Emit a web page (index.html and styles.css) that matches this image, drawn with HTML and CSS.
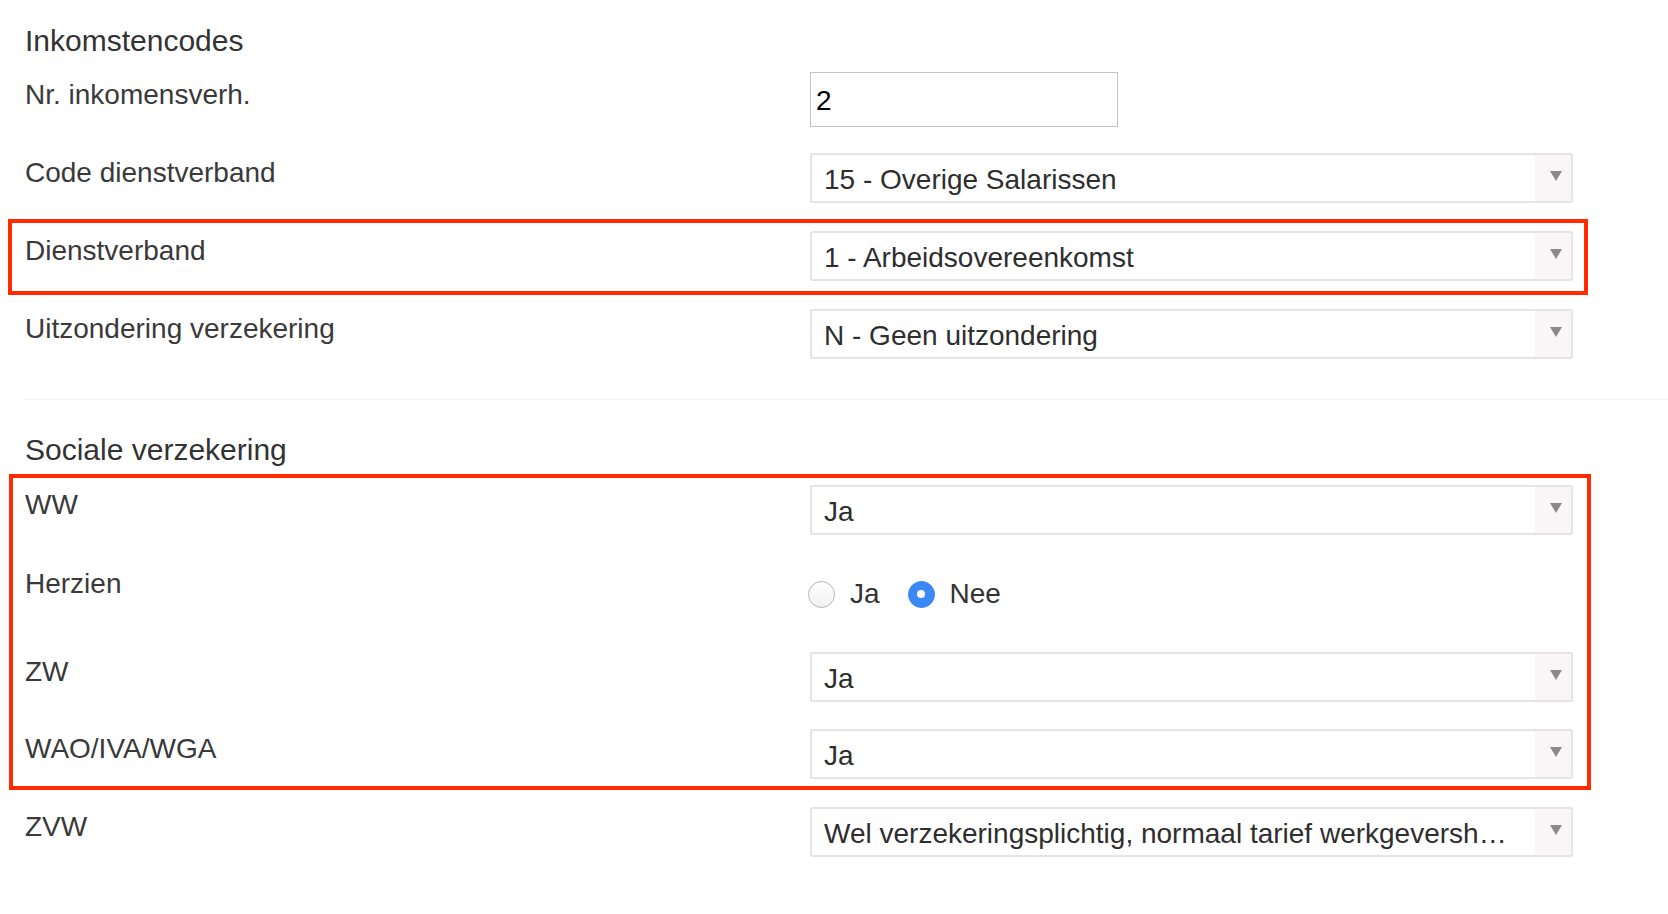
FILE: index.html
```html
<!DOCTYPE html>
<html lang="nl">
<head>
<meta charset="utf-8">
<title>Inkomstencodes</title>
<link rel="stylesheet" href="styles.css">
</head>
<body>
<div class="page">
  <h2 class="section-title">Inkomstencodes</h2>

  <div class="row row-input">
    <div class="label">Nr. inkomensverh.</div>
    <div class="control"><input class="text-input" type="text" value="2"></div>
  </div>

  <div class="row">
    <div class="label">Code dienstverband</div>
    <div class="control">
      <div class="select"><span class="select-text">15 - Overige Salarissen</span><span class="select-arrow"><i class="tri"></i></span></div>
    </div>
  </div>

  <div class="hl hl-one">
    <div class="row">
      <div class="label">Dienstverband</div>
      <div class="control">
        <div class="select"><span class="select-text">1 - Arbeidsovereenkomst</span><span class="select-arrow"><i class="tri"></i></span></div>
      </div>
    </div>
  </div>

  <div class="row row-last">
    <div class="label">Uitzondering verzekering</div>
    <div class="control">
      <div class="select"><span class="select-text">N - Geen uitzondering</span><span class="select-arrow"><i class="tri"></i></span></div>
    </div>
  </div>

  <div class="separator"></div>

  <h2 class="section-title title-two">Sociale verzekering</h2>

  <div class="hl hl-two">
    <div class="row">
      <div class="label">WW</div>
      <div class="control">
        <div class="select"><span class="select-text">Ja</span><span class="select-arrow"><i class="tri"></i></span></div>
      </div>
    </div>

    <div class="row row-radio">
      <div class="label">Herzien</div>
      <div class="control">
        <div class="radios">
          <span class="radio"></span><span class="radio-text">Ja</span>
          <span class="radio radio-checked"></span><span class="radio-text">Nee</span>
        </div>
      </div>
    </div>

    <div class="row">
      <div class="label">ZW</div>
      <div class="control">
        <div class="select"><span class="select-text">Ja</span><span class="select-arrow"><i class="tri"></i></span></div>
      </div>
    </div>

    <div class="row">
      <div class="label">WAO/IVA/WGA</div>
      <div class="control">
        <div class="select"><span class="select-text">Ja</span><span class="select-arrow"><i class="tri"></i></span></div>
      </div>
    </div>
  </div>

  <div class="row">
    <div class="label">ZVW</div>
    <div class="control">
      <div class="select"><span class="select-text">Wel verzekeringsplichtig, normaal tarief werkgeversheffing Zvw</span><span class="select-arrow"><i class="tri"></i></span></div>
    </div>
  </div>
</div>
</body>
</html>
```

FILE: styles.css
```css
html, body {
  margin: 0;
  padding: 0;
  background: #ffffff;
}

body {
  font-family: "Liberation Sans", Arial, sans-serif;
  color: #333333;
}

.page {
  padding: 23px 0 0 25px;
}

.section-title {
  margin: 0 0 13px 0;
  font-size: 30px;
  line-height: 36px;
  font-weight: normal;
  color: #333333;
}

.title-two {
  margin-bottom: 17.5px;
}

.row {
  display: flex;
  align-items: flex-start;
  width: 1548px;
  margin-bottom: 27.75px;
}

.row-input {
  margin-bottom: 26px;
}

.row-last {
  margin-bottom: 40px;
}

.label {
  width: 785px;
  flex: none;
  padding-top: 4px;
  font-size: 28px;
  line-height: 32px;
  color: #3a3a3a;
}

.row-input .label {
  padding-top: 7px;
}

.control {
  width: 763px;
  flex: none;
}

.text-input {
  display: block;
  box-sizing: border-box;
  width: 308px;
  height: 55px;
  margin: 0;
  padding: 2px 5px 0 5px;
  border: 1px solid #c3c3c3;
  border-radius: 0;
  font-family: "Liberation Sans", Arial, sans-serif;
  font-size: 28px;
  color: #000000;
  background: #ffffff;
  outline: none;
}

.select {
  box-sizing: border-box;
  display: flex;
  align-items: stretch;
  height: 50px;
  border: 2px solid #e8e4e5;
  border-radius: 2px;
  background: #ffffff;
}

.select-text {
  flex: 1;
  min-width: 0;
  padding: 4px 20px 0 12px;
  font-size: 28px;
  line-height: 42px;
  color: #2e2e2e;
  white-space: nowrap;
  overflow: hidden;
  text-overflow: ellipsis;
}

.select-arrow {
  flex: none;
  width: 36px;
  background: #f8f6f7;
  display: flex;
  align-items: center;
  justify-content: center;
}

.tri {
  display: block;
  width: 0;
  height: 0;
  margin: -4px 0 0 6px;
  border-left: 6px solid transparent;
  border-right: 6px solid transparent;
  border-top: 10px solid #8a8a8a;
}

.separator {
  height: 1px;
  background: #f2f2f2;
  margin-bottom: 32px;
}

.row-radio .label {
  padding-top: 4.8px;
}

.radios {
  display: flex;
  align-items: center;
  height: 61px;
  margin-left: -2px;
}

.radio {
  box-sizing: border-box;
  flex: none;
  width: 27px;
  height: 27px;
  border-radius: 50%;
  border: 1px solid #b4b4b4;
  background: linear-gradient(#ffffff, #f1f1f1);
  margin-top: 2px;
}

.radio-checked {
  position: relative;
  border: 1px solid #3583f4;
  background: #3b88f7;
}

.radio-checked::after {
  content: "";
  position: absolute;
  left: 50%;
  top: 50%;
  width: 8px;
  height: 8px;
  margin: -4px 0 0 -4px;
  border-radius: 50%;
  background: #ffffff;
}

.radio-text {
  font-size: 28px;
  line-height: 32px;
  color: #333333;
  margin-left: 15px;
  margin-right: 28px;
  padding-top: 2px;
}

.hl {
  position: relative;
  margin-bottom: 27.75px;
  width: 1548px;
}

.hl > .row:last-child {
  margin-bottom: 0;
}

.hl::before {
  content: "";
  position: absolute;
  border: 4px solid #ff2a00;
  pointer-events: none;
}

.hl-one::before {
  top: -11.75px;
  bottom: -14.25px;
  left: -17px;
  right: -15px;
}

.hl-two::before {
  top: -11px;
  bottom: -10.25px;
  left: -16px;
  right: -18px;
}
```
